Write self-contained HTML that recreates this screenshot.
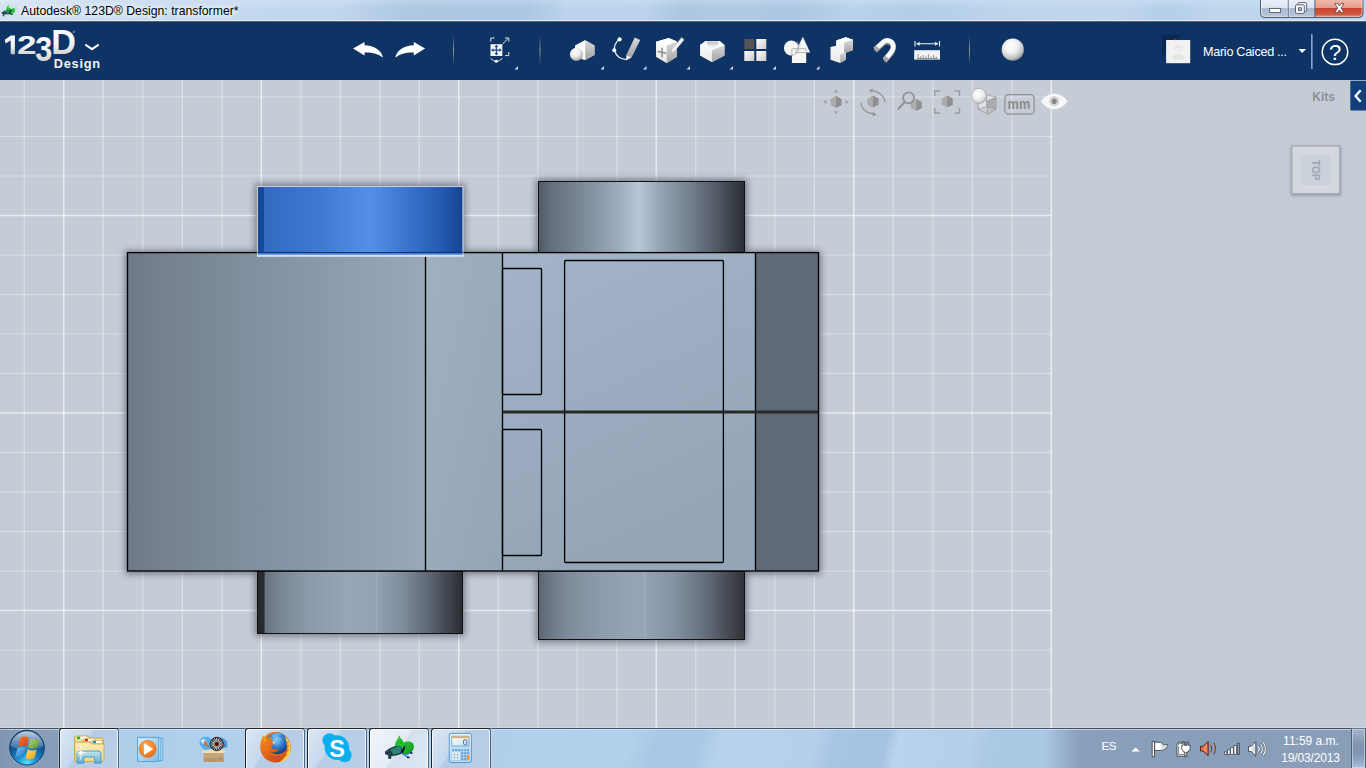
<!DOCTYPE html>
<html><head><meta charset="utf-8">
<style>
*{margin:0;padding:0;box-sizing:border-box}
html,body{width:1366px;height:768px;overflow:hidden;background:#c5ccd6;font-family:"Liberation Sans",sans-serif}
.abs{position:absolute}
#title{position:absolute;left:0;top:0;width:1366px;height:21px;background:linear-gradient(180deg,rgba(255,255,255,0) 0,rgba(255,255,255,0) 20px,#e3ebf5 20px,#e3ebf5 21px),linear-gradient(180deg,rgba(255,255,255,.18) 0,rgba(255,255,255,0) 9px),linear-gradient(100deg,#d3e2f2 0,#c6daef 100px,#c1d7ee 330px,#aec8e4 400px,#abc6e3 520px,#bbd3ec 560px,#bad2eb 640px,#adc7e3 670px,#b0cae5 730px,#abc6e3 780px,#b9d2eb 840px,#b4cee8 900px,#bcd4ec 1000px,#bfd6ed 1100px,#b5cfe9 1150px,#bdd5ed 1200px,#c0d7ee 1366px)}
#title .t{position:absolute;left:21px;top:3px;font-size:12.25px;text-shadow:0 0 6px #fff,0 0 8px #fff,0 0 10px #fff;color:#000;white-space:nowrap;line-height:16px}
#bar{position:absolute;left:0;top:21px;width:1366px;height:59px;background:#0e3466;border-top:1px solid #566170}
#view{position:absolute;left:0;top:80px;width:1366px;height:648px;background:#c5ccd6;overflow:hidden}

svg{position:absolute;left:0;top:0;overflow:visible}
.m{stroke:#fff;stroke-opacity:.38;stroke-width:1.15}
.M{stroke:#fff;stroke-opacity:.6;stroke-width:1.65}

#tb{position:absolute;left:0;top:728px;width:1366px;height:40px;overflow:hidden;background:linear-gradient(105deg,#b0cde9 60px,#b2cfeb 240px,#b3d0ec 330px,#b1ceea 480px,#b3d0ec 610px,#a9c7e4 640px,#aac8e5 680px,#b6d2ed 700px,#b4d0ec 790px,#a7c4e2 810px,#a6c3e1 860px,#bad5ee 872px,#b5d1ec 885px,#b4d0eb 940px,#abc8e5 960px,#aac7e4 1040px,#a8c5e2 1366px)}
#tb:before{content:"";position:absolute;left:0;top:0;width:1366px;height:1px;background:#46525f;z-index:5}
#tb:after{content:"";position:absolute;left:0;top:1px;width:1366px;height:1px;background:rgba(225,238,250,.6);z-index:5}
.tbl{position:absolute;left:0;top:0;width:59px;height:40px;background:linear-gradient(90deg,#7f95b0 0,#869cb6 20px,#889eb8 59px)}
.tbr{position:absolute;left:1045px;top:0;width:321px;height:40px;background:linear-gradient(90deg,rgba(139,160,186,0) 0,#8aa0ba 34px,#889db8 321px)}
.btn{position:absolute;top:0;z-index:6;width:60px;height:42px;border:1px solid #20252c;border-right-color:#55657a;border-radius:3px;background:linear-gradient(125deg,rgba(226,235,246,.85) 0,rgba(204,219,238,.78) 40%,rgba(184,204,229,.72) 41%,rgba(188,208,232,.78) 100%);box-shadow:inset 0 0 0 1px rgba(255,255,255,.75),0 0 0 1px rgba(190,218,245,.5)}
.btn.act{background:linear-gradient(125deg,#f2f6fb 0,#e3ebf5 50%,#d4e0ee 51%,#e0e9f4 100%)}
.sd{position:absolute;left:1351px;top:0;z-index:6;width:15px;height:41px;border:1px solid #4e5d72;border-top-color:#66768a;background:linear-gradient(180deg,#a6b5c9 0,#93a5bc 22%,#8094ae 40%,#7f94af 62%,#93acc9 85%,#a8c4e3 100%);box-shadow:inset 0 0 0 1px rgba(222,234,246,.5)}
.tx{position:absolute;color:#fff;font-size:12px;line-height:14px;white-space:nowrap}
#hl727{position:absolute;left:0;top:727px;width:1366px;height:1px;background:rgba(255,255,255,.22)}
</style></head><body>
<div id="title"><div class="t">Autodesk® 123D® Design: transformer*</div></div>
<div id="bar"></div>
<div id="view">
<svg id="grid" width="1366" height="648" viewBox="0 0 1366 648">
<line x1="24.3" y1="0" x2="24.3" y2="648" class="m"/>
<line x1="63.8" y1="0" x2="63.8" y2="648" class="M"/>
<line x1="103.3" y1="0" x2="103.3" y2="648" class="m"/>
<line x1="142.8" y1="0" x2="142.8" y2="648" class="m"/>
<line x1="182.3" y1="0" x2="182.3" y2="648" class="m"/>
<line x1="221.8" y1="0" x2="221.8" y2="648" class="m"/>
<line x1="261.3" y1="0" x2="261.3" y2="648" class="M"/>
<line x1="300.8" y1="0" x2="300.8" y2="648" class="m"/>
<line x1="340.3" y1="0" x2="340.3" y2="648" class="m"/>
<line x1="379.8" y1="0" x2="379.8" y2="648" class="m"/>
<line x1="419.3" y1="0" x2="419.3" y2="648" class="m"/>
<line x1="458.8" y1="0" x2="458.8" y2="648" class="M"/>
<line x1="498.3" y1="0" x2="498.3" y2="648" class="m"/>
<line x1="537.8" y1="0" x2="537.8" y2="648" class="m"/>
<line x1="577.3" y1="0" x2="577.3" y2="648" class="m"/>
<line x1="616.8" y1="0" x2="616.8" y2="648" class="m"/>
<line x1="656.3" y1="0" x2="656.3" y2="648" class="M"/>
<line x1="695.8" y1="0" x2="695.8" y2="648" class="m"/>
<line x1="735.3" y1="0" x2="735.3" y2="648" class="m"/>
<line x1="774.8" y1="0" x2="774.8" y2="648" class="m"/>
<line x1="814.3" y1="0" x2="814.3" y2="648" class="m"/>
<line x1="853.8" y1="0" x2="853.8" y2="648" class="M"/>
<line x1="893.3" y1="0" x2="893.3" y2="648" class="m"/>
<line x1="932.8" y1="0" x2="932.8" y2="648" class="m"/>
<line x1="972.3" y1="0" x2="972.3" y2="648" class="m"/>
<line x1="1011.8" y1="0" x2="1011.8" y2="648" class="m"/>
<line x1="1051.3" y1="0" x2="1051.3" y2="648" class="M"/>
<line x1="0" y1="-22.5" x2="1051.6" y2="-22.5" class="m"/>
<line x1="0" y1="17.0" x2="1051.6" y2="17.0" class="m"/>
<line x1="0" y1="56.5" x2="1051.6" y2="56.5" class="m"/>
<line x1="0" y1="96.0" x2="1051.6" y2="96.0" class="m"/>
<line x1="0" y1="135.5" x2="1051.6" y2="135.5" class="M"/>
<line x1="0" y1="175.0" x2="1051.6" y2="175.0" class="m"/>
<line x1="0" y1="214.5" x2="1051.6" y2="214.5" class="m"/>
<line x1="0" y1="254.0" x2="1051.6" y2="254.0" class="m"/>
<line x1="0" y1="293.5" x2="1051.6" y2="293.5" class="m"/>
<line x1="0" y1="333.0" x2="1051.6" y2="333.0" class="M"/>
<line x1="0" y1="372.5" x2="1051.6" y2="372.5" class="m"/>
<line x1="0" y1="412.0" x2="1051.6" y2="412.0" class="m"/>
<line x1="0" y1="451.5" x2="1051.6" y2="451.5" class="m"/>
<line x1="0" y1="491.0" x2="1051.6" y2="491.0" class="m"/>
<line x1="0" y1="530.5" x2="1051.6" y2="530.5" class="M"/>
<line x1="0" y1="570.0" x2="1051.6" y2="570.0" class="m"/>
<line x1="0" y1="609.5" x2="1051.6" y2="609.5" class="m"/>
</svg>
<svg id="model" style="top:-80px" width="1366" height="768" viewBox="0 0 1366 768">
<defs>
<filter id="sh" x="-10%" y="-10%" width="120%" height="120%"><feGaussianBlur stdDeviation="3.8"/></filter>
<linearGradient id="gL" x1="0" x2="1" y1="0" y2="0"><stop offset="0" stop-color="#6c7886"/><stop offset=".12" stop-color="#75818f"/><stop offset=".5" stop-color="#8493a4"/><stop offset="1" stop-color="#99a9bb"/></linearGradient>
<linearGradient id="gM" x1="0" x2="1" y1="0" y2="1"><stop offset="0" stop-color="#a0b0c3"/><stop offset="1" stop-color="#95a5b8"/></linearGradient>
<linearGradient id="gR" x1="0" x2=".35" y1="0" y2="1"><stop offset="0" stop-color="#a4b4c8"/><stop offset="1" stop-color="#95a5b8"/></linearGradient>
<linearGradient id="gB" x1="0" x2="1" y1="0" y2="0"><stop offset="0" stop-color="#17479a"/><stop offset=".028" stop-color="#17479a"/><stop offset=".03" stop-color="#336ac0"/><stop offset=".3" stop-color="#3f78d0"/><stop offset=".55" stop-color="#5590e6"/><stop offset=".7" stop-color="#3f78d2"/><stop offset=".9" stop-color="#245bb0"/><stop offset="1" stop-color="#164493"/></linearGradient>
<linearGradient id="gT" x1="0" x2="1" y1="0" y2="0"><stop offset="0" stop-color="#505a67"/><stop offset=".06" stop-color="#636e7c"/><stop offset=".25" stop-color="#8290a0"/><stop offset=".4" stop-color="#9fafbf"/><stop offset=".49" stop-color="#b6c7d6"/><stop offset=".58" stop-color="#97a7b8"/><stop offset=".75" stop-color="#707c8a"/><stop offset=".9" stop-color="#474e58"/><stop offset="1" stop-color="#2b2e33"/></linearGradient>
<linearGradient id="gC" x1="0" x2="1" y1="0" y2="0"><stop offset="0" stop-color="#26282b"/><stop offset=".033" stop-color="#2a2c30"/><stop offset=".036" stop-color="#66717e"/><stop offset=".12" stop-color="#7b8896"/><stop offset=".25" stop-color="#8b9aaa"/><stop offset=".45" stop-color="#97a7b8"/><stop offset=".575" stop-color="#93a3b4"/><stop offset=".58" stop-color="#9cacbd"/><stop offset=".59" stop-color="#91a1b2"/><stop offset=".7" stop-color="#808e9e"/><stop offset=".82" stop-color="#626c79"/><stop offset=".92" stop-color="#434952"/><stop offset="1" stop-color="#2a2c30"/></linearGradient>
<linearGradient id="gD" x1="0" x2="1" y1="0" y2="0"><stop offset="0" stop-color="#5a6572"/><stop offset=".05" stop-color="#6a7583"/><stop offset=".14" stop-color="#7e8b9a"/><stop offset=".3" stop-color="#8c9bac"/><stop offset=".45" stop-color="#94a4b5"/><stop offset=".51" stop-color="#94a4b5"/><stop offset=".515" stop-color="#9dadbe"/><stop offset=".525" stop-color="#92a2b3"/><stop offset=".65" stop-color="#8594a5"/><stop offset=".8" stop-color="#66717e"/><stop offset=".92" stop-color="#454b54"/><stop offset="1" stop-color="#2e3136"/></linearGradient>
</defs>
<g filter="url(#sh)" fill="#465060" opacity=".66">
<rect x="125" y="251" width="696" height="323"/>
<rect x="255" y="184" width="210" height="70"/>
<rect x="536" y="179" width="211" height="75"/>
<rect x="255" y="570" width="210" height="66"/>
<rect x="536" y="570" width="211" height="72"/>
</g>
<!-- bottom cylinders -->
<rect x="257.5" y="571" width="205" height="62.5" fill="url(#gC)" stroke="#111" stroke-width="1"/>
<rect x="538.5" y="571" width="206" height="68.5" fill="url(#gD)" stroke="#111" stroke-width="1"/>
<!-- top right cylinder -->
<rect x="538.5" y="181.5" width="206" height="72" fill="url(#gT)" stroke="#111" stroke-width="1"/>
<!-- body -->
<rect x="127.5" y="252.5" width="298" height="318.5" fill="url(#gL)"/>
<rect x="425.5" y="252.5" width="77" height="318.5" fill="url(#gM)"/>
<rect x="502.5" y="253" width="253" height="318" fill="url(#gR)"/>
<rect x="755.5" y="253" width="63" height="318" fill="#5f6a76"/>
<g fill="none" stroke="#000" stroke-width="1.35">
<rect x="127.5" y="252.6" width="691" height="318.4"/>
<line x1="425.5" y1="252.5" x2="425.5" y2="571"/>
<line x1="502.5" y1="252.5" x2="502.5" y2="571"/>
<line x1="755.5" y1="252.5" x2="755.5" y2="571"/>
<rect x="502.5" y="268.5" width="39" height="126" rx="1"/>
<rect x="502.5" y="429.5" width="39" height="126" rx="1"/>
<rect x="564.6" y="260.5" width="158.8" height="302" rx="1.2"/>
</g>
<line x1="502.5" y1="412" x2="818.5" y2="412" stroke="#282828" stroke-width="3"/>
<!-- blue cyl -->
<rect x="258" y="187" width="204.300" height="68" fill="url(#gB)"/>
<rect x="258" y="252" width="204.300" height="1.100" fill="#05307f"/>
<rect x="258" y="253.100" width="204.300" height="2" fill="#4a86e0"/>
<rect x="257.400" y="186.500" width="205.700" height="68.800" fill="none" stroke="#dfe4eb" stroke-opacity=".7" stroke-width="1.100"/>
<rect x="257" y="255" width="206.800" height="1.800" fill="#dde2e9"/>
</svg>
</div>
<!--BAR--><svg id="baricons" width="1366" height="768" viewBox="0 0 1366 768" style="position:absolute;left:0;top:0">
<defs>
<linearGradient id="wg" x1="0" x2="0" y1="0" y2="1"><stop offset="0" stop-color="#fff"/><stop offset=".55" stop-color="#f2f2f2"/><stop offset="1" stop-color="#bdbdbd"/></linearGradient>
<linearGradient id="wg2" x1="0" x2="1" y1="0" y2="1"><stop offset="0" stop-color="#fff"/><stop offset="1" stop-color="#c9c9c9"/></linearGradient>
<linearGradient id="cubeTop" x1="0" x2="0" y1="0" y2="1"><stop offset="0" stop-color="#fff"/><stop offset="1" stop-color="#e8e8e8"/></linearGradient>
<linearGradient id="cubeL" x1="0" x2="0" y1="0" y2="1"><stop offset="0" stop-color="#f4f4f4"/><stop offset="1" stop-color="#d2d2d2"/></linearGradient>
<linearGradient id="cubeR" x1="0" x2="0" y1="0" y2="1"><stop offset="0" stop-color="#dadada"/><stop offset="1" stop-color="#a2a2a2"/></linearGradient>
<radialGradient id="sph" cx=".4" cy=".32" r=".7"><stop offset="0" stop-color="#fff"/><stop offset=".45" stop-color="#f1f1f1"/><stop offset=".8" stop-color="#c4c4c4"/><stop offset="1" stop-color="#8e8e8e"/></radialGradient>
<linearGradient id="sep" x1="0" x2="0" y1="0" y2="1"><stop offset="0" stop-color="#8d8c80" stop-opacity=".2"/><stop offset=".5" stop-color="#a9a798" stop-opacity=".9"/><stop offset="1" stop-color="#8d8c80" stop-opacity=".2"/></linearGradient>
<linearGradient id="bowl" x1="0" x2="0" y1="0" y2="1"><stop offset="0" stop-color="#bdbdbd"/><stop offset=".6" stop-color="#e6e6e6"/><stop offset="1" stop-color="#f8f8f8"/></linearGradient>
</defs>
<!-- logo -->
<g font-family="Liberation Sans" font-weight="bold" fill="url(#wg)">
<path d="M4.800 39.800 L11 35.400 H14.900 V54.300 H10.700 V40.400 L5.600 43.600Z"/>
<text x="17" y="54.300" font-size="26" textLength="19.500" lengthAdjust="spacingAndGlyphs">2</text>
<text x="35.200" y="60.600" font-size="34.500" textLength="17" lengthAdjust="spacingAndGlyphs">3</text>
<text x="51.200" y="54.300" font-size="34.200">D</text>
</g>
<circle cx="73.800" cy="31.800" r=".9" fill="none" stroke="#e8e8e8" stroke-width=".4"/>
<text x="53.800" y="67.900" font-family="Liberation Sans" font-weight="bold" font-size="12.800" fill="#f4f4f4" textLength="46.300" lengthAdjust="spacing">Design</text>
<path d="M86 45.200 L92 49.200 L98 45.200" fill="none" stroke="#fff" stroke-width="2.100" stroke-linecap="round" stroke-linejoin="round"/>
<!-- undo / redo -->
<path id="undo" d="M353.100 48.600 L364.500 42 L364.500 45.200 C374 45.400 381.500 50 383 57.600 C378 53.500 372.500 52.200 364.500 52.400 L364.500 55.600Z" fill="#fff"/>
<path d="M425.100 48.600 L413.800 42 L413.800 45.200 C404.300 45.400 396.800 50 395.300 57.600 C400.300 53.500 405.800 52.200 413.800 52.400 L413.800 55.600Z" fill="#fff"/>
<!-- separators -->
<rect x="453" y="37" width="1" height="26" fill="url(#sep)"/>
<rect x="539.5" y="37" width="1" height="26" fill="url(#sep)"/>
<rect x="969" y="37" width="1" height="26" fill="url(#sep)"/>
<!-- dropdown corner triangles -->
<g fill="#d8d8d8">
<path d="M518 66 L518 69.5 L514.5 69.5Z"/><path d="M604 66 L604 69.5 L600.5 69.5Z"/><path d="M646.5 66 L646.5 69.5 L643 69.5Z"/><path d="M690 66 L690 69.5 L686.5 69.5Z"/><path d="M733 66 L733 69.5 L729.5 69.5Z"/><path d="M776 66 L776 69.5 L772.5 69.5Z"/><path d="M819.5 66 L819.5 69.5 L816 69.5Z"/>
</g>
<!-- transform -->
<g fill="none" stroke="#e4e4e4" stroke-width="1">
<path d="M490.8 41.6 V38 H494.6 M505 38 H508.8 V41.6 M508.8 52 V55.6 H505"/>
<path d="M490.6 58.4 Q496.4 64.4 502.4 58.4"/>
<path d="M502.4 44.2 L507.8 38.8"/>
</g>
<rect x="490.5" y="44.2" width="11.8" height="11.8" fill="#f6f6f6"/>
<path d="M496.4 45.6 V54.6 M491.9 50.1 H500.9" stroke="#1d4a88" stroke-width="1.3"/>
<path d="M496.4 44.8 L498.3 47.1 H494.5Z M496.4 55.4 L498.3 53.1 H494.5Z M491.1 50.1 L493.4 48.2 V52Z M501.7 50.1 L499.4 48.2 V52Z" fill="#1d4a88"/>
<circle cx="496.3" cy="61.2" r="1.5" fill="#fff"/>
<!-- primitives -->
<path d="M575.2 45.6 L585.2 40.2 L594.5 45.6 L594.5 54.9 L585.2 59.9 L575.2 57Z" fill="#e6e6e6"/>
<path d="M575.2 45.6 L585.2 40.2 L585.2 59.9 L575.2 57Z" fill="#fdfdfd"/>
<path d="M585.2 40.2 L594.5 45.6 L594.5 54.9 L585.2 59.9Z" fill="url(#cubeR)"/>
<circle cx="576.5" cy="54.3" r="6.6" fill="url(#sph)"/>
<!-- sketch -->
<path d="M619.6 39.3 C611.5 45 612.5 58.5 627 59.6" fill="none" stroke="#f0f0f0" stroke-width="1.3"/>
<circle cx="619.6" cy="39.3" r="2.1" fill="#fff"/><circle cx="614.2" cy="50.3" r="2" fill="#fff"/>
<path d="M634.7 37.5 L640.2 40 L631.6 57.6 L626.4 54.9Z" fill="url(#cubeR)"/>
<path d="M626.4 54.9 L631.6 57.6 L626.2 60.2Z" fill="#fafafa"/>
<!-- construct -->
<path d="M656.2 41.8 L668.7 38.1 L677 41.6 L677 56.8 L666.8 63 L656.2 56.8Z" fill="#f4f4f4"/>
<path d="M656.2 41.8 L666.8 45.6 L666.8 63 L656.2 56.8Z" fill="url(#cubeTop)"/>
<path d="M656.2 41.8 L668.7 38.1 L677 41.6 L666.8 45.6Z" fill="#fff"/>
<path d="M666.8 45.6 L677 41.6 L677 56.8 L666.8 63Z" fill="url(#cubeR)"/>
<path d="M662.1 47.8 V57.2 M657.8 51.6 L666.3 53.2" stroke="#8c8c8c" stroke-width="1.5" fill="none"/>
<path d="M681.6 37.4 L684.2 39.8 L674.6 51.2 L671 53.2 L671.8 49.2Z" fill="#f0f0f0" stroke="#a8a8a8" stroke-width=".5"/>
<!-- modify -->
<path d="M700.2 44.9 L705.4 41.2 L719.7 41.2 L724.3 44.9 L724.3 55.5 L711.9 62.1 L700.2 55.5Z" fill="#e8e8e8"/>
<path d="M700.2 44.9 L705.4 41.2 L719.7 41.2 L724.3 44.9 L724.3 55.5 L711.9 62.1 L700.2 55.5Z" fill="url(#cubeTop)"/>
<path d="M711.9 50 L724.3 44.9 L724.3 55.5 L711.9 62.1Z" fill="url(#cubeR)"/>
<path d="M700.2 44.9 L705.4 41.2 L719.7 41.2 L724.3 44.9 L711.9 50Z" fill="#fff"/>
<path d="M706.5 41.4 C706.5 50.5 718.5 50.5 718.5 41.4Z" fill="url(#bowl)"/>
<!-- pattern -->
<rect x="744.3" y="39" width="10" height="10" fill="#555"/>
<rect x="756.3" y="39" width="10" height="10" fill="url(#wg2)"/>
<rect x="744.3" y="51" width="10" height="10" fill="url(#wg2)"/>
<rect x="756.3" y="51" width="10" height="10" fill="url(#wg2)"/>
<!-- combine -->
<circle cx="791.3" cy="48" r="7.4" fill="#f6f6f6"/>
<path d="M802.8 36.8 L810.2 52.6 H795.4Z" fill="#f6f6f6"/>
<rect x="791.9" y="48.7" width="14.3" height="14.3" fill="#f6f6f6"/>
<g fill="none" stroke="#a6a6a6" stroke-width=".8"><path d="M791.9 55.5 V48.7 H806.2 V52.6"/><path d="M800 43 L795.4 52.6 H806.2"/><path d="M798.7 48.5 A7.4 7.4 0 0 1 791.9 55.4"/><path d="M797 41.5 A7.4 7.4 0 0 1 798.7 48"/></g>
<!-- snap -->
<path d="M830.5 46.9 L836.1 45.8 L836.1 40.5 L845.8 37.2 L853 39.7 L853 50.1 L845.8 52.8 L845.8 59.8 L840.1 63 L830.5 59.8Z" fill="url(#cubeTop)"/>
<path d="M844.2 42.3 L853 39.7 L853 50.1 L845.8 52.8 L844.2 53.4Z" fill="url(#cubeR)"/>
<path d="M840.1 54.2 L845.8 52.5 L845.8 59.8 L840.1 63Z" fill="url(#cubeR)"/>
<path d="M836.1 40.5 L845.8 37.2 L853 39.7 L844.2 42.3Z" fill="#fff"/>
<!-- magnet -->
<path d="M875.3 49.3 L883.5 41.8 C887.5 38.5 894 41.5 893.3 47.5 C893 50.5 891.5 52 884.8 59.6" fill="none" stroke="#8a8a8a" stroke-width="4.8" transform="translate(-.2 1.7)"/>
<path d="M875.3 49.3 L883.5 41.8 C887.5 38.5 894 41.5 893.3 47.5 C893 50.5 891.5 52 884.8 59.6" fill="none" stroke="#f8f8f8" stroke-width="4.8"/>
<path d="M873.5 47.6 L877 51.2 L879.4 49 L875.9 45.4Z" fill="#a8a8a8"/>
<path d="M883 57.9 L886.7 61.4 L888.9 59 L885.2 55.6Z" fill="#a8a8a8"/>
<!-- measure -->
<g stroke="#f2f2f2" stroke-width="1.1" fill="none"><path d="M915 41 V46.6 M939.5 41 V46.6 M917 43.8 H937.5"/></g>
<path d="M916 43.8 L919.6 41.8 V45.8Z M938.5 43.8 L934.9 41.8 V45.8Z" fill="#f2f2f2"/>
<rect x="914.2" y="50.2" width="25.8" height="9.4" fill="#f3f3f3"/>
<path d="M918 59 V54 M920.6 59 V56.5 M923.2 59 V55 M925.8 59 V56.5 M928.4 59 V54 M931 59 V56.5 M933.6 59 V55 M936.2 59 V56.5 M917 58.6 H938" stroke="#858585" stroke-width=".9" fill="none"/>
<!-- sphere -->
<circle cx="1012.8" cy="49.7" r="11.1" fill="url(#sph)"/>
<!-- user -->
<path d="M1162 35 H1182 L1175 40.200 H1166.100 V52 L1162 58Z" fill="#0a2850"/>
<rect x="1166.100" y="40" width="24.100" height="23.200" fill="#f1f1f1"/>
<rect x="1174" y="38.600" width="1.600" height="1.500" fill="#c0202c"/>
<circle cx="1178.200" cy="48.600" r="3.300" fill="#e4e4e4"/>
<path d="M1172.300 58.500 C1172.300 52.500 1184.100 52.500 1184.100 58.500 C1181 59.800 1175.400 59.800 1172.300 58.500Z" fill="#e4e4e4"/>
<circle cx="1178.200" cy="49.600" r="2.200" fill="#f1f1f1"/>
<text x="1203" y="55.800" font-family="Liberation Sans" font-size="12.600" fill="#fff" textLength="84" lengthAdjust="spacing">Mario Caiced ...</text>
<path d="M1298.500 49 H1306 L1302.200 53Z" fill="#fff"/>
<rect x="1311.200" y="34.200" width="1.300" height="34.800" fill="#9cc3e6"/>
<circle cx="1335" cy="51.900" r="12.700" fill="none" stroke="#fff" stroke-width="1.500"/>
<text x="1335" y="59.800" font-family="Liberation Sans" font-size="22" fill="#fff" text-anchor="middle">?</text>
</svg>
<!--/BAR-->
<!--TOP--><svg id="topicons" width="1366" height="768" viewBox="0 0 1366 768" style="position:absolute;left:0;top:0">
<defs>
<linearGradient id="wbL" x1="0" x2="0" y1="0" y2="1"><stop offset="0" stop-color="#e9eff7"/><stop offset=".46" stop-color="#d9e3ef"/><stop offset=".47" stop-color="#a7bad1"/><stop offset="1" stop-color="#b6c7da"/></linearGradient>
<linearGradient id="wbR" x1="0" x2="0" y1="0" y2="1"><stop offset="0" stop-color="#f0b9ad"/><stop offset=".46" stop-color="#e29a8b"/><stop offset=".47" stop-color="#c9432d"/><stop offset=".8" stop-color="#cf5a43"/><stop offset="1" stop-color="#e39a86"/></linearGradient>
<clipPath id="wbc"><path d="M1260.5 -2 H1363 V13.5 a4 4 0 0 1 -4 4 H1264.5 a4 4 0 0 1 -4 -4Z"/></clipPath>
</defs>
<!-- title icon -->
<path d="M6.5 8.5 C7 6 8.5 5.5 8.8 8 L10.5 7.5 C10 9 11.5 9.5 12.5 8.5 C14 7.5 15.5 8.5 15 10.5 C14.5 13 12.5 14.5 10 14 L6 12.5Z" fill="#23c22b"/>
<path d="M7.3 6 L8.5 4.5 L8.7 7Z" fill="#3fd045"/>
<path d="M1 13 C2.5 11.5 5 10.5 7.5 10.3 L10 11.5 L11 13.5 L13.5 14 L12 15 L9 14.3 L4.5 14.6 L4 16.5 L2.5 16 L3 14.3 Z" fill="#2c4a52"/>
<path d="M5 11 L9.5 10 L10.5 12 L7 13.5Z" fill="#2f8f55"/>
<circle cx="10.6" cy="10.5" r=".9" fill="#1a3a8a"/><circle cx="8.3" cy="10.6" r=".6" fill="#2b5fb0"/>
<path d="M11 10.5 L9.5 13" stroke="#15202a" stroke-width=".9"/>
<!-- window buttons -->
<g clip-path="url(#wbc)">
<rect x="1260" y="0" width="55" height="18" fill="url(#wbL)"/>
<rect x="1315" y="0" width="49" height="18" fill="url(#wbR)"/>
</g>
<path d="M1260.5 -2 V13.5 a4 4 0 0 0 4 4 H1359 a4 4 0 0 0 4 -4 V-2" fill="none" stroke="#4f5d72" stroke-width="1"/>
<path d="M1261.5 0 V13.3 a3 3 0 0 0 3 3 H1359 a3 3 0 0 0 3 -3 V0" fill="none" stroke="#fff" stroke-opacity=".45" stroke-width="1"/>
<path d="M1288.2 0 V17 M1314.9 0 V17" stroke="#4f5d72" stroke-width="1"/>
<path d="M1289.2 0 V16.5 M1287.2 0 V16.5" stroke="#fff" stroke-opacity=".4" stroke-width="1"/>
<rect x="1269.6" y="8.4" width="10.8" height="4" fill="#fff" stroke="#4d5768" stroke-width=".9"/>
<g fill="#f4f6f9" stroke="#4d5768" stroke-width=".9">
<rect x="1297.8" y="2.6" width="8.8" height="8.6" rx="1"/>
<rect x="1295.5" y="4.8" width="8.8" height="8.6" rx="1"/>
</g>
<rect x="1298.6" y="7.8" width="2.8" height="2.8" fill="#a9bad0" stroke="#4d5768" stroke-width=".8"/>
<path d="M1334.8 3.6 L1337.8 3.6 L1339.4 6 L1341 3.6 L1344 3.6 L1341.1 8 L1344.2 12.4 L1341 12.4 L1339.4 10 L1337.8 12.4 L1334.6 12.4 L1337.7 8Z" fill="#fff" stroke="#5a3a40" stroke-width=".8" stroke-linejoin="round"/>
</svg>
<!--/TOP-->
<!--VW--><svg id="vwicons" width="1366" height="768" viewBox="0 0 1366 768" style="position:absolute;left:0;top:0">
<defs>
<filter id="vcs" x="-20%" y="-20%" width="140%" height="140%"><feGaussianBlur stdDeviation="1.6"/></filter>
<radialGradient id="sph2" cx=".4" cy=".35" r=".7"><stop offset="0" stop-color="#fff"/><stop offset=".5" stop-color="#f0f0f0"/><stop offset=".85" stop-color="#cfcfcf"/><stop offset="1" stop-color="#a8a8a8"/></radialGradient>
<g id="hex"><path d="M0 -6 L-5.6 -3 L-5.6 3.2 L0 6 Z" fill="#acacac"/><path d="M0 -6 L5.6 -3 L5.6 3.2 L0 6 Z" fill="#8f8f8f"/></g>
</defs>
<!-- pan -->
<use href="#hex" x="836" y="102"/>
<g fill="#9d9d9d"><path d="M836 89.400 L838.200 93.200 L836 92.200 L833.800 93.200Z"/><path d="M836 114.600 L838.200 110.800 L836 111.800 L833.800 110.800Z"/><path d="M823.200 102 L827 99.800 L826 102 L827 104.200Z"/><path d="M848.800 102 L845 99.800 L846 102 L845 104.200Z"/></g>
<!-- orbit -->
<use href="#hex" x="873" y="101.6"/>
<g fill="none" stroke="#959595" stroke-width="1.3"><path d="M870.5 90.6 C877.5 90.6 884.8 95.5 885 102.5"/><path d="M860.8 102.5 C861.5 109 866.5 113.5 874.5 114"/></g>
<path d="M868.8 90.4 L872.8 88.4 L872.2 92.8Z M876.8 114.2 L872.6 112 L872.8 116.4Z" fill="#959595"/>
<!-- zoom -->
<use href="#hex" x="916.2" y="105"/>
<circle cx="908.6" cy="97.8" r="5.5" fill="#c5ccd7" fill-opacity=".55" stroke="#939393" stroke-width="1.8"/>
<path d="M904.500 102.300 L897.800 109.400" stroke="#939393" stroke-width="2.200"/>
<!-- fit -->
<use href="#hex" x="947.2" y="101.6"/>
<path d="M940 90.8 H934.8 V96 M954.5 90.8 H959.6 V96 M959.6 108 V113.2 H954.5 M940 113.2 H934.8 V108" fill="none" stroke="#959595" stroke-width="1.2"/>
<!-- material -->
<path d="M978.3 97.1 L986.7 94.7 L996 97.1 L996 109.2 L987.5 114.4 L978.3 109.2Z" fill="#e6e9ee" fill-opacity=".75"/>
<path d="M987.5 101.1 L996 97.1 L996 109.2 L987.5 114.4Z" fill="#9d9d9d" fill-opacity=".8"/>
<path d="M978.3 109.2 L986.7 106.7 L996 109.2 L987.5 114.4Z" fill="#c4c6ca" fill-opacity=".8"/>
<path d="M978.3 97.1 L987.5 101.1 L996 97.1 L986.7 94.7Z M978.3 97.1 V109.2 L987.5 114.4 L996 109.2 V97.1 M987.5 101.1 V114.4 M986.7 94.7 V106.7 L978.3 109.2 M986.7 106.7 L996 109.2" fill="none" stroke="#9a9a9a" stroke-width=".8"/>
<circle cx="979.1" cy="95.9" r="7.5" fill="url(#sph2)" stroke="#a5a5a5" stroke-width=".7"/>
<!-- mm -->
<rect x="1004.8" y="94.6" width="29.4" height="19.6" rx="4.2" fill="none" stroke="#929292" stroke-width="1.3"/>
<text x="1007.6" y="108.9" font-family="Liberation Sans" font-weight="bold" font-size="14" fill="#8c8c8c" textLength="22.6" lengthAdjust="spacingAndGlyphs">mm</text>
<!-- eye -->
<path d="M1041 101.4 C1047.5 91.2 1060.8 91.2 1067.4 101.4 C1060.8 111.4 1047.5 111.4 1041 101.4Z" fill="#f7f7f7"/>
<circle cx="1054.2" cy="101.3" r="5" fill="#d2d2d2"/><ellipse cx="1054.2" cy="101.3" rx="2.5" ry="2.8" fill="#878787"/>
<!-- kits -->
<text x="1312.3" y="100.8" font-family="Liberation Sans" font-weight="bold" font-size="13" fill="#8d9097" textLength="22.6" lengthAdjust="spacingAndGlyphs">Kits</text>
<path d="M1351.3 80.8 H1366 V110.5 H1351.3 a1 1 0 0 1 -1 -1 V81.8 a1 1 0 0 1 1 -1Z" fill="#13407c"/>
<path d="M1360.6 90.2 L1355.6 96 L1360.6 101.8" fill="none" stroke="#fff" stroke-width="2.4"/>
<!-- view cube -->
<rect x="1291" y="146" width="50" height="49.5" fill="#566070" opacity=".5" filter="url(#vcs)"/>
<rect x="1291.9" y="146.1" width="47.8" height="47.6" fill="#d3d7de" stroke="#a4a8b0" stroke-width="1"/>
<rect x="1300.8" y="155" width="30.2" height="30" fill="#cbd1da"/>
<text transform="translate(1312.4 170.2) rotate(90)" font-family="Liberation Sans" font-weight="bold" font-size="10" fill="#9ea5b0" text-anchor="middle">TOP</text>
</svg>
<!--/VW-->
<div id="hl727"></div><!--TASK--><div id="tb">
<div class="tbl"></div><div class="tbr"></div>
<div class="btn" style="left:59px"></div>
<div class="btn" style="left:245px"></div>
<div class="btn" style="left:307px"></div>
<div class="btn act" style="left:369px"></div>
<div class="btn" style="left:431px"></div>
<div class="sd"></div>
<div class="tx" style="left:1101.5px;top:11px;font-size:11.6px;letter-spacing:-.6px">ES</div>
<div class="tx clk" style="left:1276px;top:6px;width:70px;text-align:center">11:59 a.m.</div>
<div class="tx clk" style="left:1275.5px;top:23px;width:70px;text-align:center;letter-spacing:-.15px">19/03/2013</div>
</div>
<!--/TASK-->
<!--TBI--><svg id="tbicons" width="1366" height="768" viewBox="0 0 1366 768" style="position:absolute;left:0;top:0;z-index:10">
<defs>
<radialGradient id="orb" cx=".5" cy=".95" r=".95"><stop offset="0" stop-color="#5fe0ff"/><stop offset=".25" stop-color="#1f9ad6"/><stop offset=".55" stop-color="#14609f"/><stop offset="1" stop-color="#0c3c72"/></radialGradient>
<linearGradient id="orbg" x1="0" x2="0" y1="0" y2="1"><stop offset="0" stop-color="#fff" stop-opacity=".75"/><stop offset="1" stop-color="#fff" stop-opacity=".12"/></linearGradient>
<linearGradient id="fr" x1="0" x2="1" y1="0" y2="1"><stop offset="0" stop-color="#f47a2a"/><stop offset="1" stop-color="#d93a1a"/></linearGradient>
<linearGradient id="fg" x1="0" x2="1" y1="0" y2="1"><stop offset="0" stop-color="#b5d46a"/><stop offset="1" stop-color="#5a9a35"/></linearGradient>
<linearGradient id="fb" x1="0" x2="1" y1="0" y2="1"><stop offset="0" stop-color="#7cc4f2"/><stop offset="1" stop-color="#1a73c4"/></linearGradient>
<linearGradient id="fy" x1="0" x2="1" y1="0" y2="1"><stop offset="0" stop-color="#ffd85a"/><stop offset="1" stop-color="#f5a21a"/></linearGradient>
<linearGradient id="fold" x1="0" x2="0" y1="0" y2="1"><stop offset="0" stop-color="#fbeeb4"/><stop offset="1" stop-color="#f3d77c"/></linearGradient>
<linearGradient id="stand" x1="0" x2="0" y1="0" y2="1"><stop offset="0" stop-color="#bfe6fa"/><stop offset="1" stop-color="#4da7e0"/></linearGradient>
<radialGradient id="ffg" cx=".45" cy=".35" r=".6"><stop offset="0" stop-color="#8fd0f5"/><stop offset=".6" stop-color="#2a78c8"/><stop offset="1" stop-color="#1a3f8f"/></radialGradient>
<linearGradient id="fox" x1="0" x2="1" y1="0" y2="1"><stop offset="0" stop-color="#ffd23a"/><stop offset=".4" stop-color="#f58a1a"/><stop offset="1" stop-color="#d7411a"/></linearGradient>
<linearGradient id="calc" x1="0" x2="0" y1="0" y2="1"><stop offset="0" stop-color="#e4f1fb"/><stop offset="1" stop-color="#9cc6ea"/></linearGradient>
<linearGradient id="wmp" x1="0" x2="1" y1="0" y2="1"><stop offset="0" stop-color="#d6ecfa"/><stop offset="1" stop-color="#7fbfe8"/></linearGradient>
<radialGradient id="wmo" cx=".4" cy=".35" r=".7"><stop offset="0" stop-color="#ffb050"/><stop offset="1" stop-color="#ee6a10"/></radialGradient>
<radialGradient id="fox2" cx=".3" cy=".35" r=".85"><stop offset="0" stop-color="#f08a1e"/><stop offset=".6" stop-color="#e2611a"/><stop offset="1" stop-color="#b8361a"/></radialGradient>
<linearGradient id="foxh" x1="0" x2="1" y1="0" y2="1"><stop offset="0" stop-color="#f4901e"/><stop offset=".5" stop-color="#e5691a"/><stop offset="1" stop-color="#c4401a"/></linearGradient>
<linearGradient id="subg" x1="0" x2="1" y1="0" y2="1"><stop offset="0" stop-color="#2fd23a"/><stop offset=".6" stop-color="#1cb827"/><stop offset="1" stop-color="#0f8f1a"/></linearGradient>
<linearGradient id="cdisp" x1="0" x2="1" y1="0" y2="1"><stop offset="0" stop-color="#fdfeff"/><stop offset="1" stop-color="#c9def2"/></linearGradient>
</defs>
<!-- start orb -->
<circle cx="27" cy="747.7" r="18.3" fill="#b9d3ee" fill-opacity=".45"/>
<circle cx="27" cy="747.7" r="17.4" fill="url(#orb)" stroke="#0b3a6e" stroke-width="1"/>
<path d="M10.5 746 A16.6 16.6 0 0 1 43.5 746 C35 750.5 19 750.5 10.5 746Z" fill="url(#orbg)"/>
<g transform="translate(27.4 747.9) scale(1.16) translate(-26.6 -747.5)">
<path d="M20.5 738.6 C23 737.4 25.5 737.5 27.8 738.8 L25.8 746.3 C23.6 745.2 21.2 745.1 18.6 746.3Z" fill="url(#fr)"/>
<path d="M29.3 739.5 C31.6 740.8 34.3 741 37 739.6 L35 747.2 C32.4 748.5 29.8 748.3 27.3 747Z" fill="url(#fg)"/>
<path d="M18.2 747.8 C20.7 746.6 23.2 746.7 25.4 747.9 L23.4 755.4 C21.2 754.2 18.8 754.2 16.2 755.4Z" fill="url(#fb)"/>
<path d="M26.9 748.6 C29.3 749.9 32 750.1 34.6 748.8 L32.6 756.3 C30 757.6 27.4 757.4 24.9 756.1Z" fill="url(#fy)"/>
</g>
<!-- explorer -->
<path d="M74.5 737.2 a1.2 1.2 0 0 1 1.2 -1.2 H88 a1.2 1.2 0 0 1 1.2 1.2 V738 H102 a1.6 1.6 0 0 1 1.6 1.6 V760 a1.2 1.2 0 0 1 -1.2 1.2 H75.7 a1.2 1.2 0 0 1 -1.2 -1.2Z" fill="#f5dd8c" stroke="#c9a64a" stroke-width=".9"/>
<rect x="77" y="736.6" width="9.5" height="2.6" fill="#fff"/><rect x="77" y="736.6" width="3.2" height="2.6" fill="#1fb53a"/>
<path d="M83 739.8 a1 1 0 0 1 1 -1 H94.5 a1 1 0 0 1 1 1 V742 H83Z" fill="#f5dd8c" stroke="#c9a64a" stroke-width=".7"/>
<rect x="85" y="738.9" width="9" height="2.4" fill="#fff"/><rect x="85" y="738.9" width="3" height="2.4" fill="#d5281e"/>
<path d="M91 741.6 a1 1 0 0 1 1 -1 H103 V744 H91Z" fill="#f5dd8c" stroke="#c9a64a" stroke-width=".7"/>
<rect x="93" y="740.9" width="8.5" height="2.3" fill="#fff"/><rect x="93" y="740.9" width="3" height="2.3" fill="#1a8be8"/>
<path d="M74.8 743.4 a1.2 1.2 0 0 1 1.2 -1.2 H90 L91.5 744 H102.8 a1.2 1.2 0 0 1 1.2 1.2 V760.3 a1.2 1.2 0 0 1 -1.2 1.2 H76 a1.2 1.2 0 0 1 -1.2 -1.2Z" fill="url(#fold)" stroke="#c9a64a" stroke-width=".9"/>
<path d="M77 754 a3 3 0 0 1 3 -3 H98 a3 3 0 0 1 3 3 V763.2 H94.6 V757 H83.8 V763.2 H77Z" fill="url(#stand)" fill-opacity=".88" stroke="#3b97d6" stroke-width=".9"/>
<path d="M80.6 745 V760 M76.5 752.6 H86 M78 749.8 L83.4 755.6 M84.8 748.6 L77.5 756.5" stroke="#fff" stroke-width=".7" stroke-opacity=".85"/>
<circle cx="80.8" cy="752.8" r="1.8" fill="#fff"/>
<!-- WMP -->
<rect x="143.5" y="738.4" width="19.3" height="22" fill="#a9d6f3" stroke="#5aa7da" stroke-width=".8"/>
<rect x="141.5" y="737.8" width="19.3" height="23" fill="#c4e2f7" stroke="#5aa7da" stroke-width=".8"/>
<rect x="137.6" y="737.3" width="21.2" height="24.2" fill="url(#wmp)" stroke="#4f9ed4" stroke-width=".9"/>
<circle cx="147.7" cy="749" r="8.5" fill="url(#wmo)" stroke="#e06a10" stroke-width=".6"/>
<path d="M143.9 743.1 L153.3 749 L143.9 755Z" fill="#fff"/>
<!-- installer -->
<path d="M203.6 752 H223.8 V762 H203.6Z" fill="#c4a57c"/>
<path d="M201.2 751.6 L203.8 750 H223.6 L225.8 751.6 L224 753 H203.2Z" fill="#f3dcb2"/>
<path d="M203.6 758 H223.8 V762 H203.6Z" fill="#b39469" fill-opacity=".7"/>
<path d="M219.5 757.5 L221 755.5 L222.5 757.5Z M220.2 758 H221.8 V759.5 H220.2Z" fill="#ab8c62"/>
<path d="M199.6 742.5 C199.6 737.5 205 735.5 210 737.5 L213 748 L205 750.2 C202 748.5 199.8 746 199.6 742.5Z" fill="#4fb0ec"/>
<path d="M200.5 740.5 C202.5 738.5 205 739 206 740.5 L203 744Z" fill="#d9eefb"/>
<path d="M204.2 740 L209.6 747.2 L208 748 L206 744.6 L205 746 L204 745.2Z" fill="#e8642c"/>
<path d="M221 737.5 C225.5 738.5 228.6 742.5 227 747.5 L221 748.5Z" fill="#3aa4e6"/>
<circle cx="216.8" cy="744" r="7.2" fill="#2e2a2c"/>
<g stroke="#e4e4e4" stroke-width=".9"><path d="M216.8 737.8 V750.2 M210.6 744 H223 M212.4 739.6 L221.2 748.4 M221.2 739.6 L212.4 748.4 M214.4 738.3 L219.2 749.7 M219.2 738.3 L214.4 749.7 M211.1 741.6 L222.5 746.4 M222.5 741.6 L211.1 746.4"/></g>
<circle cx="216.8" cy="744" r="2.3" fill="#5a1e1a"/><circle cx="216.8" cy="744" r=".9" fill="#2a1a1a"/>
<path d="M222.5 745 L224.5 743.5 L224.8 747Z" fill="#c8342a"/>
<!-- firefox -->
<circle cx="275.5" cy="747.3" r="15.2" fill="url(#fox2)"/>
<circle cx="277.3" cy="743.4" r="10.9" fill="url(#ffg)"/>
<path d="M271 734.500 C275.500 731.800 281 732.300 285 735.500 C281.500 734.500 279 735 277.500 736.500 C280 737 281.500 738.500 282 740.500 C279.500 739 277 739 275 740 C273.500 738 272 736 271 734.500Z" fill="#7fc6f0" fill-opacity=".55"/>
<path d="M263.200 735.600 L266.500 739.300 L271.600 736.300 L272.300 741.300 L275.400 742.700 L272.600 745 L271.200 747 C272.500 749.300 275.500 749.600 278.300 748.900 L278.600 750.600 C276.500 752.800 272.500 753.300 270 751.500 C271 755.500 276 757.500 281.500 755.500 C277 761 268 760.500 263.500 755.500 C259.500 750.500 259.500 742 263.200 735.600Z" fill="url(#foxh)"/>
<path d="M263.200 735.600 L266.500 739.300 L264.500 742.500 C263.200 740.500 262.800 738 263.200 735.600Z" fill="#f7a11f"/>
<path d="M272.300 741.300 L275.400 742.700 L273.300 743.800Z" fill="#fff3d6"/>
<path d="M284.500 735.800 C289.500 739.500 291.800 746 290 752.500 C288.500 757.500 284.500 761 279.500 762.200 C284.500 758.500 287.500 753.500 287.300 748 C287.200 743.500 286.200 739.500 284.500 735.800Z" fill="#ffd02e"/>
<path d="M288.200 741.500 L286.300 744.500 L288.800 745.500 L286.500 748.800 L288.500 749.800 L285.500 753.500 L287 754.800 L283 758.500" fill="none" stroke="#e8661a" stroke-width=".9"/>
<!-- skype -->
<g fill="#0baff0">
<circle cx="336.900" cy="747.600" r="12.300"/><circle cx="329.500" cy="740.300" r="7"/><circle cx="344.600" cy="755.300" r="7"/>
</g>
<text x="337" y="756.500" font-family="Liberation Sans" font-weight="bold" font-size="23.500" fill="#fff" text-anchor="middle">S</text>
<!-- 123D submarine -->
<path d="M395 748 C394.5 744 395.5 741 397.5 739.5 C398 737.5 398.8 736 399.5 735.2 C399.8 736.5 400.2 737.5 401 738.5 C402.5 739.5 403.3 741 403.5 742.5 C406.5 741 411 741.2 413 743.5 C415 746.5 413.5 751 410 753.5 C407 755 403 754.5 400 753Z" fill="url(#subg)"/>
<path d="M397.500 739.500 C399 740.500 400.500 741 401.500 743.500" fill="none" stroke="#0e8a1a" stroke-width=".7"/>
<path d="M384.800 752 C387 749.500 391 747 395.500 746 L401 746.500 L403 750 L401 754 L396 755.500 L391.500 756 L391 759 L388 758.500 L388.500 755.500 L385.500 754.500Z" fill="#1d3540"/>
<path d="M390 749.500 L397 746.500 L401.500 748.500 L400 753 L393.500 754.500Z" fill="#2a8a6a"/>
<path d="M386 752.500 L390 750 M387 755 L391 753 M392.500 756.500 L394.500 753.500" stroke="#3a6a7a" stroke-width=".8"/>
<circle cx="398.500" cy="743.800" r="1.100" fill="#3a8a8a"/><circle cx="399.800" cy="747.500" r="1.200" fill="#3a7ab0"/><circle cx="395.800" cy="749.300" r="1" fill="#2b62b5"/><circle cx="392.500" cy="751.200" r=".9" fill="#2b62b5"/>
<path d="M404.800 746.200 L402 753.200" stroke="#0a0f14" stroke-width="1.700" stroke-linecap="round"/>
<path d="M404.300 745.800 L405.800 746.800" stroke="#2a78d0" stroke-width="1.200"/>
<path d="M401 752.800 L407.800 757.200 M404.500 755.200 L411.500 752.600" stroke="#2a78d0" stroke-width="1.100"/>
<path d="M407 757.300 L409.500 757.600 M410.800 752.200 L412.300 753.600" stroke="#10161c" stroke-width="1.500"/>
<!-- calc -->
<rect x="449.300" y="733.400" width="22" height="29" rx="1.600" fill="url(#calc)" stroke="#4f93cf" stroke-width="1"/>
<rect x="450.300" y="734.400" width="20" height="27" rx="1" fill="none" stroke="#fff" stroke-opacity=".6" stroke-width=".8"/>
<rect x="451.800" y="736.200" width="17.200" height="9.800" fill="url(#cdisp)" stroke="#5f9fd6" stroke-width=".8"/>
<rect x="452.200" y="736.500" width="16.400" height="1.700" fill="#f5b042"/>
<rect x="463.600" y="739.800" width="3.200" height="4.800" rx="1" fill="none" stroke="#3f62a0" stroke-width=".9"/>
<g fill="#5b9bd3">
<rect x="452.100" y="749.200" width="1.900" height="1.900"/><rect x="455.150" y="749.200" width="1.900" height="1.900"/><rect x="458.200" y="749.200" width="1.900" height="1.900"/><rect x="461.250" y="749.200" width="1.900" height="1.900"/><rect x="464.300" y="749.200" width="1.900" height="1.900"/><rect x="467.200" y="749.200" width="1.900" height="1.900"/>
<rect x="461.250" y="752.200" width="1.900" height="1.900"/><rect x="464.300" y="752.200" width="1.900" height="1.900"/><rect x="467.200" y="752.200" width="1.900" height="1.900"/>
<rect x="461.250" y="755.200" width="1.900" height="1.900"/><rect x="464.300" y="755.200" width="1.900" height="1.900"/>
<rect x="461.250" y="758.200" width="1.900" height="1.900"/><rect x="464.300" y="758.200" width="1.900" height="1.900"/>
</g>
<g fill="#fbf6ee">
<rect x="452.100" y="752.200" width="1.900" height="1.900"/><rect x="455.150" y="752.200" width="1.900" height="1.900"/><rect x="458.200" y="752.200" width="1.900" height="1.900"/>
<rect x="452.100" y="755.200" width="1.900" height="1.900"/><rect x="455.150" y="755.200" width="1.900" height="1.900"/><rect x="458.200" y="755.200" width="1.900" height="1.900"/>
<rect x="452.100" y="758.200" width="1.900" height="1.900"/><rect x="455.150" y="758.200" width="1.900" height="1.900"/><rect x="458.200" y="758.200" width="1.900" height="1.900"/>
</g>
<rect x="467" y="755" width="2.200" height="5.200" fill="#f09a2a"/>
<!-- tray -->
<path d="M1131.500 751.600 L1135.600 747.400 L1139.700 751.600Z" fill="#fff"/>
<g fill="#fff" stroke="#2b3038" stroke-width=".8" stroke-linejoin="round">
<path d="M1154.600 742.200 H1160.500 C1162 744.500 1164 745.600 1167.900 744.700 C1167.500 747.500 1165 750.300 1160.500 750.400 H1154.600Z"/>
<rect x="1152.200" y="741.400" width="2.300" height="15.300"/>
</g>
<path d="M1160.500 742.600 C1162 744.800 1164 745.900 1167.300 745.300 C1166.500 747.500 1164.500 749 1162 749.500Z" fill="#d5d9de"/>
<g fill="#fff" stroke="#2b3038" stroke-width=".8" stroke-linejoin="round">
<path d="M1177 744 L1178.800 742.200 H1185 V756.200 H1177Z"/>
<path d="M1178.600 745 V743.600 H1183 M1178.600 746 V754.600 H1184" fill="none" stroke-width=".6"/>
<path d="M1183 745.300 V741.700 H1184.300 V745.300 H1187.100 V741.700 H1188.400 V745.300 H1190.200 V748.900 L1188.200 752 H1186.700 V756.700 H1185 V752 H1183.600 L1181.800 748.900 V745.300Z"/>
</g>
<path d="M1200.500 746.300 H1203 L1208.200 741.400 V755.800 L1203 751 H1200.500Z" fill="#e0683a" stroke="#33170f" stroke-width=".8" stroke-linejoin="round"/>
<path d="M1203.500 747 L1207 743.800 V753.400 L1203.500 750.300Z" fill="#ee8a5c"/>
<path d="M1210.600 744.800 C1212 746.800 1212 750.400 1210.600 752.400 M1213.600 742.800 C1216 745.800 1216 751.400 1213.600 754.400" fill="none" stroke="#8a2a14" stroke-width="1"/>
<g fill="#fff" stroke="#2b3038" stroke-width=".6">
<rect x="1224.400" y="752" width="2.400" height="2.300"/><rect x="1227.600" y="749.900" width="2.400" height="4.400"/><rect x="1230.800" y="747.300" width="2.400" height="7"/><rect x="1234" y="745.300" width="2.400" height="9"/>
<rect x="1237.200" y="743.200" width="2.400" height="11.100" fill="#8c9aa8"/>
</g>
<path d="M1248.600 746.300 H1251.200 L1255.800 741.700 V756.100 L1251.200 751.500 H1248.600Z" fill="#fff" stroke="#2b3038" stroke-width=".8" stroke-linejoin="round"/>
<path d="M1251.600 746.800 L1254.900 743.600 V754.200 L1251.600 751Z" fill="#d9dde2"/>
<g fill="none" stroke="#2b3038" stroke-width="2.200" stroke-opacity=".55"><path d="M1258.300 746.300 C1259.500 747.800 1259.500 750 1258.300 751.500 M1260.800 744.300 C1262.800 746.800 1262.800 751 1260.800 753.500 M1263.300 742.600 C1266 746 1266 751.800 1263.300 755.200"/></g>
<g fill="none" stroke="#fff" stroke-width="1.100"><path d="M1258.300 746.300 C1259.500 747.800 1259.500 750 1258.300 751.500 M1260.800 744.300 C1262.800 746.800 1262.800 751 1260.800 753.500 M1263.300 742.600 C1266 746 1266 751.800 1263.300 755.200"/></g>
</svg>
<!--/TBI-->
</body></html>
